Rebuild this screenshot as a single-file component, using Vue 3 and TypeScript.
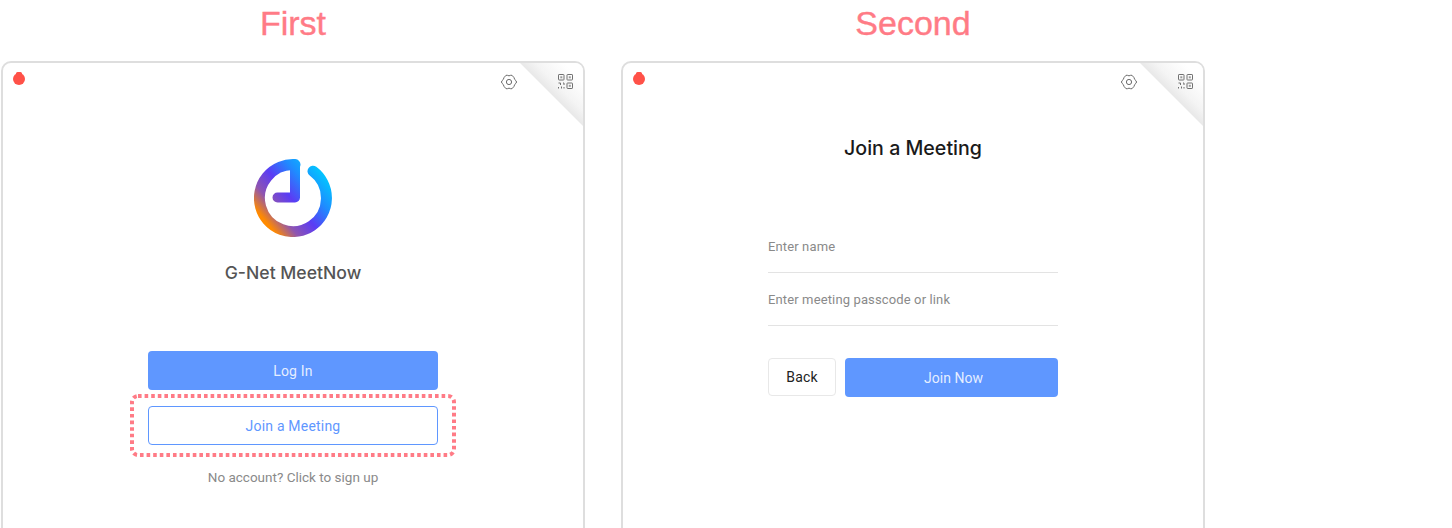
<script setup lang="ts">
interface Step {
  key: 'home' | 'join'
  title: string
}

const steps: Step[] = [
  { key: 'home', title: 'First' },
  { key: 'join', title: 'Second' },
]
</script>

<template>
  <div class="page">
    <section v-for="step in steps" :key="step.key" class="column">
      <h2 class="step-title">{{ step.title }}</h2>
      <div class="window">
        <div class="fold"></div>
        <div class="toolbar">
          <span class="close-dot"></span>
          <div class="tools">
            <svg class="gear" width="16" height="16" viewBox="0 0 16 16" fill="none" stroke="#6a6a6a" stroke-width="1" stroke-linejoin="round">
              <path d="M5 1.3 H6.4 Q8 2.4 9.6 1.3 H11 L13 3.6 Q13.2 5.6 15.3 7 V9 Q13.2 10.4 13 12.4 L11 14.7 H9.6 Q8 13.6 6.4 14.7 H5 L3 12.4 Q2.8 10.4 0.7 9 V7 Q2.8 5.6 3 3.6 Z" />
              <circle cx="8" cy="8" r="2.6" />
            </svg>
            <svg class="qr" width="15" height="15" viewBox="0 0 15 15" fill="none" stroke="#707070" stroke-width="1">
              <rect x="0.5" y="0.5" width="5.5" height="5.5" rx="0.6" />
              <rect x="9" y="0.5" width="5.5" height="5.5" rx="0.6" />
              <rect x="9" y="9" width="5.5" height="5.5" rx="0.6" />
              <path d="M0.5 9h2v2M5 9h1v2M0.5 13v1.5M3.5 12.5v2M6 13v1.5" />
              <rect x="2.3" y="2.3" width="2" height="2" fill="#9a9a9a" stroke="none" />
              <rect x="10.8" y="2.3" width="2" height="2" fill="#9a9a9a" stroke="none" />
              <rect x="10.8" y="10.8" width="2" height="2" fill="#9a9a9a" stroke="none" />
            </svg>
          </div>
        </div>

        <div v-if="step.key === 'home'" class="home">
          <svg class="logo" width="78" height="78" viewBox="0 0 78 78" fill="none">
            <defs>
              <linearGradient id="logo-grad" gradientUnits="userSpaceOnUse" x1="70" y1="13" x2="10" y2="63">
                <stop offset="0" stop-color="#00c9ff" />
                <stop offset="0.28" stop-color="#1f8bff" />
                <stop offset="0.54" stop-color="#5b3cf4" />
                <stop offset="0.78" stop-color="#8f55b0" />
                <stop offset="0.98" stop-color="#ff8a00" />
              </linearGradient>
            </defs>
            <path
              d="M41 5.6 A33.5 33.5 0 1 0 59 12.2"
              stroke="url(#logo-grad)"
              stroke-width="11"
              stroke-linecap="round"
            />
            <path
              d="M41 6 V38.5 H23.5"
              stroke="url(#logo-grad)"
              stroke-width="10"
              stroke-linecap="round"
              stroke-linejoin="round"
            />
          </svg>
          <div class="app-name">G-Net MeetNow</div>
          <button class="btn primary login">Log In</button>
          <div class="highlight">
            <svg class="dots" width="326" height="63" viewBox="0 0 326 63" fill="none">
              <rect
                x="2"
                y="2"
                width="322"
                height="59"
                rx="6"
                stroke="#ff7b86"
                stroke-width="4"
                stroke-dasharray="3.6 3"
              />
            </svg>
            <button class="btn outline">Join a Meeting</button>
          </div>
          <div class="signup">No account? Click to sign up</div>
        </div>

        <div v-else class="join">
          <h3 class="join-title">Join a Meeting</h3>
          <input class="field first" type="text" placeholder="Enter name" />
          <input class="field" type="text" placeholder="Enter meeting passcode or link" />
          <div class="actions">
            <button class="btn back">Back</button>
            <button class="btn primary now">Join Now</button>
          </div>
        </div>
      </div>
    </section>
  </div>
</template>

<style>
html,
body {
  margin: 0;
  background: #fff;
}
</style>

<style scoped>
.page {
  display: flex;
  gap: 36px;
  height: 528px;
  padding-left: 1px;
  overflow: hidden;
  font-family: Roboto, "Liberation Sans", sans-serif;
}

.column {
  width: 584px;
  flex: none;
}

.step-title {
  margin: 0;
  height: 61px;
  padding-top: 3px;
  box-sizing: border-box;
  text-align: center;
  font-family: "Liberation Sans", Arial, sans-serif;
  font-size: 34px;
  line-height: 41px;
  font-weight: 400;
  color: #ff7b86;
  -webkit-text-stroke: 0.4px #ff7b86;
}

.window {
  position: relative;
  height: 520px;
  box-sizing: border-box;
  border: 2px solid #dedede;
  border-radius: 10px;
  overflow: hidden;
  background: #fff;
}

.fold {
  position: absolute;
  top: 0;
  right: 0;
  width: 63px;
  height: 63px;
  background: linear-gradient(45deg, #e8e8e8 50%, #f4f4f4 62%, #fff 85%);
  clip-path: polygon(0 0, 100% 0, 100% 100%);
}

.toolbar {
  position: relative;
  display: flex;
  justify-content: space-between;
  height: 36px;
  box-sizing: border-box;
  padding: 10px 10px 0;
}

.close-dot {
  position: relative;
  width: 12px;
  height: 12px;
  border-radius: 50%;
  background: #ff5148;
}

/* little nub on top of the dot */
.close-dot::before {
  content: '';
  position: absolute;
  top: -1px;
  left: 3px;
  width: 6px;
  height: 3px;
  border-radius: 2px;
  background: #ff5148;
}

.tools {
  display: flex;
  align-items: flex-start;
  gap: 41px;
  padding-top: 1px;
}

.home {
  display: flex;
  flex-direction: column;
  align-items: center;
  padding-top: 60px;
}

.logo {
  display: block;
}

.app-name {
  margin-top: 24px;
  font-family: Inter, Roboto, sans-serif;
  font-size: 17.6px;
  line-height: 24px;
  font-weight: 500;
  color: #555;
}

.btn {
  display: block;
  height: 39px;
  padding: 0;
  box-sizing: border-box;
  border: 1px solid transparent;
  border-radius: 4px;
  font-family: inherit;
  font-size: 14px;
  letter-spacing: 0.2px;
}

.primary {
  background: #5f97ff;
  color: rgba(255, 255, 255, 0.85);
}

.login {
  width: 290px;
  margin-top: 66px;
}

.highlight {
  position: relative;
  display: flex;
  align-items: center;
  justify-content: center;
  width: 326px;
  height: 63px;
  margin-top: 4px;
}

.dots {
  position: absolute;
  top: 0;
  left: 0;
}

.outline {
  width: 290px;
  background: #fff;
  border-color: #5f97ff;
  color: #5f97ff;
}

.signup {
  margin-top: 10px;
  font-size: 13.5px;
  line-height: 20px;
  color: #8a8a8a;
}

.join {
  display: flex;
  flex-direction: column;
  align-items: center;
}

.join-title {
  margin: 35px 0 0;
  font-family: Inter, Roboto, sans-serif;
  font-size: 19.6px;
  line-height: 28px;
  font-weight: 500;
  color: #1a1a1a;
}

.field {
  display: block;
  width: 290px;
  height: 53px;
  padding: 1px 0 0;
  box-sizing: border-box;
  border: 0;
  border-bottom: 1px solid #e3e3e3;
  outline: none;
  background: transparent;
  font-family: inherit;
  font-size: 13px;
  letter-spacing: 0.13px;
}

.field.first {
  margin-top: 58px;
}

.field::placeholder {
  color: #8a8a8a;
}

.actions {
  display: flex;
  gap: 9px;
  width: 290px;
  margin-top: 32px;
}

.back {
  width: 68px;
  height: 38px;
  background: #fff;
  border-color: #e8e8e8;
  color: #222;
}

.now {
  flex: 1;
  padding-left: 4px;
  letter-spacing: 0;
}
</style>
